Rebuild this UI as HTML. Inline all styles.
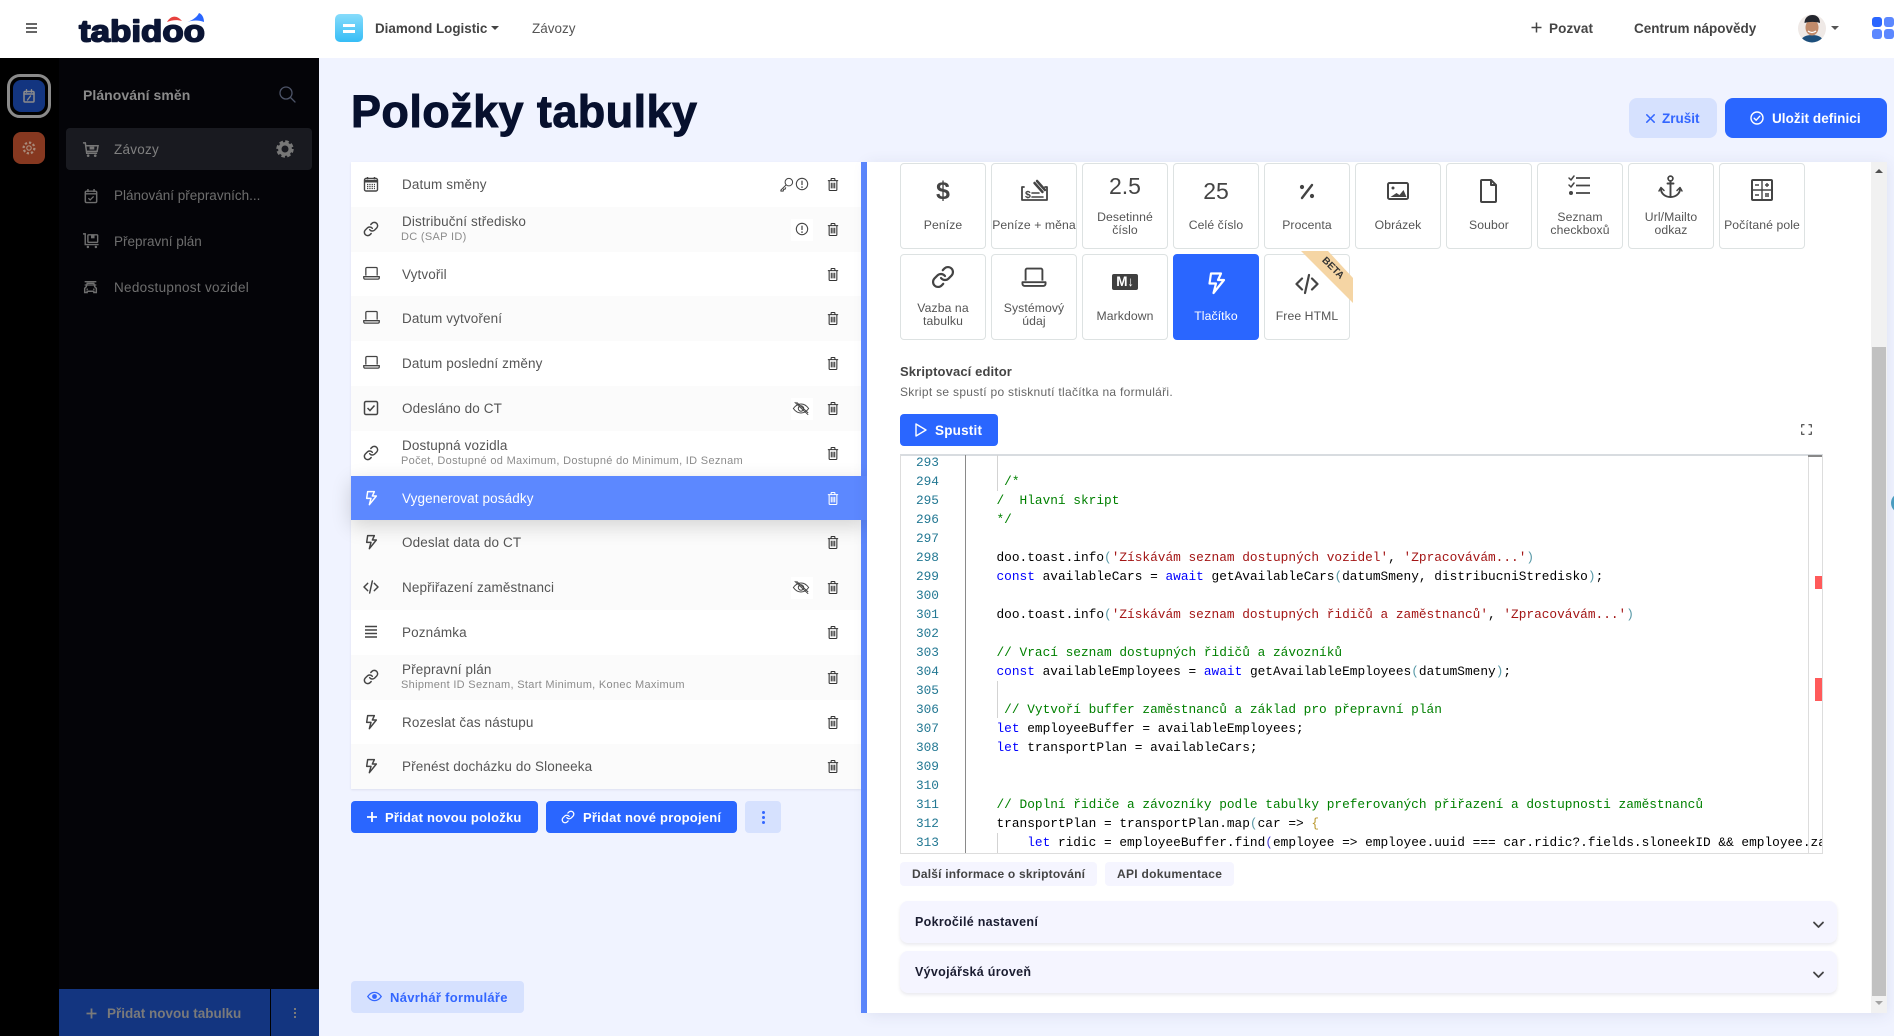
<!DOCTYPE html>
<html lang="cs"><head><meta charset="utf-8"><title>Položky tabulky</title>
<style>
*{box-sizing:border-box}
html,body{margin:0;padding:0;width:1894px;height:1036px;overflow:hidden;background:#f0f3ff;font-family:"Liberation Sans",sans-serif;color:#444}
.a{position:absolute}
.t{position:absolute;white-space:nowrap;line-height:20px}
svg{position:absolute;overflow:visible}
svg.s{fill:none;stroke:currentColor;stroke-width:2;stroke-linecap:round;stroke-linejoin:round}
.row{position:absolute;left:351px;width:510px;height:45px;background:#fff}
.row.e{background:#fbfbfb}
.row .n{position:absolute;left:51px;top:13px;font-size:13.5px;letter-spacing:.12px;line-height:20px;color:#555;white-space:nowrap}
.row .n.u{top:5px}
.row .d{position:absolute;left:50px;top:22px;font-size:11px;line-height:16px;color:#8b8b8b;white-space:nowrap;letter-spacing:.31px}
.row .ic{left:12px;top:14px;width:16px;height:16px;color:#444}
.row .tr{left:476px;top:15px;width:12px;height:15px;color:#333}
.row .x{position:absolute;left:440px;top:12px;width:22px;height:22px;background:#fff}
.btn{position:absolute;border-radius:4px;background:#2a66ff;color:#fff}
.lt{background:#d6e1fe;color:#3366ff}
.b{font-weight:700}
.tile{position:absolute;width:86px;height:86px;border:1px solid #dde2e2;border-radius:4px;background:#fff;color:#444}
.tile .l{position:absolute;left:-1px;width:86px;top:55px;text-align:center;font-size:12.2px;line-height:13px;color:#555;letter-spacing:.1px}
.tile .l.two{top:47px}
.tile svg.i{left:25px;top:14px;width:34px;height:26px}
.tile svg.i.up{top:9px}
.tile .big{position:absolute;left:-1px;width:86px;text-align:center;font-size:23px;line-height:28px;color:#444}
.tile.on{background:#2a66ff;border-color:#2a66ff;color:#fff}
.tile.on .l{color:#fff}
.code div{position:absolute;left:0;white-space:pre;line-height:19px;height:19px;font-size:12.8px;color:#000;font-family:"Liberation Mono",monospace}
.nums div{position:absolute;right:0;line-height:19px;height:19px;font-size:12.8px;color:#237893;font-family:"Liberation Mono",monospace}
.c{color:#008000}.k{color:#0000ff}.r{color:#a31515}.p{color:#5a9aa8}.y{color:#b8962a}.bb{color:#4a3fd0}
.acc{position:absolute;left:900px;width:937px;height:42px;border-radius:8px;background:#f5f5ff;box-shadow:0 2px 3px rgba(80,80,120,.12)}
.side{color:#6e6e6e;font-size:13.5px}
</style></head><body>

<svg width="0" height="0" style="position:absolute">
<defs>
<symbol id="trash" viewBox="0 0 14 16"><path d="M1 3.5h12M2.5 3.5V14a1 1 0 0 0 1 1h7a1 1 0 0 0 1-1V3.5M4.8 3.500V1.600a.6.6 0 0 1 .6-.6h3.200a.6.6 0 0 1 .6.6v1.900M5 6v6.500M7 6v6.500M9 6v6.500" fill="none" stroke="currentColor" stroke-width="1.250"/></symbol>
<symbol id="link" viewBox="0 0 24 24"><path d="M10 13a5 5 0 0 0 7.54.54l3-3a5 5 0 0 0-7.07-7.07l-1.72 1.71M14 11a5 5 0 0 0-7.54-.54l-3 3a5 5 0 0 0 7.07 7.07l1.71-1.71" fill="none" stroke="currentColor" stroke-width="2.200" stroke-linecap="round"/></symbol>
<symbol id="laptop" viewBox="0 0 24 20"><path d="M4 13V3a1.500 1.500 0 0 1 1.500-1.500h13A1.500 1.500 0 0 1 20 3v10M1 14.500h22v1.500a2 2 0 0 1-2 2H3a2 2 0 0 1-2-2z" fill="none" stroke="currentColor" stroke-width="1.800" stroke-linejoin="round"/></symbol>
<symbol id="bolt" viewBox="0 0 24 24"><path d="M7 2.500h10l-3 6.500h6L9.500 22l2.500-9.500H5.500z" fill="none" stroke="currentColor" stroke-width="2.200" stroke-linejoin="round"/></symbol>
<symbol id="code" viewBox="0 0 24 24"><path d="M7 6.500 1.500 12 7 17.500M17 6.500l5.500 5.500-5.500 5.500M14 3l-4 18" fill="none" stroke="currentColor" stroke-width="2.200" stroke-linecap="round" stroke-linejoin="round"/></symbol>
<symbol id="cal" viewBox="0 0 16 16"><rect x="1.500" y="2.500" width="13" height="12.500" rx="1.500" fill="none" stroke="currentColor" stroke-width="1.400"/><path d="M1.500 4h13v2.500h-13z" fill="currentColor"/><path d="M4.500 1v2.500M11.500 1v2.500" stroke="currentColor" stroke-width="1.500"/><path d="M4 8.500h8M4 10.500h8M4 12.500h8" stroke="currentColor" stroke-width="1.200" stroke-dasharray="1.300 1"/></symbol>
<symbol id="chk" viewBox="0 0 16 16"><rect x="1.500" y="1.500" width="13" height="13" rx="1.500" fill="none" stroke="currentColor" stroke-width="1.500"/><path d="m4.500 8 2.500 2.500 4.500-5" fill="none" stroke="currentColor" stroke-width="1.500"/></symbol>
<symbol id="lines" viewBox="0 0 16 16"><path d="M2 2.500h12M2 6h12M2 9.500h12M2 13h12" stroke="currentColor" stroke-width="1.400" fill="none"/></symbol>
<symbol id="info" viewBox="0 0 16 16"><circle cx="8" cy="8" r="6.500" fill="none" stroke="currentColor" stroke-width="1.200"/><path d="M8 4.200v5" stroke="currentColor" stroke-width="1.400" fill="none"/><circle cx="8" cy="11.500" r=".9" fill="currentColor"/></symbol>
<symbol id="key" viewBox="0 0 16 16"><circle cx="10.500" cy="5.500" r="4" fill="none" stroke="currentColor" stroke-width="1.100"/><path d="M7.500 8.500 2 14v1h2.500l.5-2h1.500l.8-2" fill="none" stroke="currentColor" stroke-width="1.100" stroke-linejoin="round"/></symbol>
<symbol id="eyex" viewBox="0 0 20 16"><path d="M1.500 8C4 4.500 7 3 10 3s6 1.500 8.500 5c-2.500 3.500-5.500 5-8.500 5S4 11.500 1.500 8z" fill="none" stroke="currentColor" stroke-width="1.100"/><circle cx="10" cy="8" r="3" fill="none" stroke="currentColor" stroke-width="1.100"/><path d="M3 1l15 14M5 1l13 12" stroke="currentColor" stroke-width="1.100" fill="none"/></symbol>
<symbol id="eye" viewBox="0 0 20 16"><path d="M1 8c2.500-3.700 5.700-5.500 9-5.500S16.500 4.300 19 8c-2.500 3.700-5.700 5.500-9 5.500S3.500 11.700 1 8z" fill="none" stroke="currentColor" stroke-width="1.700"/><circle cx="10" cy="8" r="3.200" fill="currentColor"/></symbol>
<symbol id="cart" viewBox="0 0 18 18"><path d="M1 2h2.500l1.500 11h11M4 5h13l-1 6H5" fill="none" stroke="currentColor" stroke-width="1.600"/><circle cx="6.500" cy="15.500" r="1.400" fill="currentColor"/><circle cx="14" cy="15.500" r="1.400" fill="currentColor"/><rect x="8" y="6" width="5" height="3" fill="currentColor"/></symbol>
<symbol id="calchk" viewBox="0 0 16 18"><rect x="1.500" y="3.500" width="13" height="13" rx="1.500" fill="none" stroke="currentColor" stroke-width="1.700"/><path d="M4.500 1v3.500M11.500 1v3.500M1.500 6.500h13" stroke="currentColor" stroke-width="1.700" fill="none"/><path d="m5 11.500 2 2 4-4" stroke="currentColor" stroke-width="1.500" fill="none"/></symbol>
<symbol id="cart2" viewBox="0 0 20 18"><path d="M1 1h2.500v12h15" fill="none" stroke="currentColor" stroke-width="1.600"/><rect x="6.500" y="2" width="11" height="8.500" rx="1" fill="none" stroke="currentColor" stroke-width="1.600"/><path d="M10 2h4v4h-4z" fill="currentColor"/><circle cx="6.500" cy="15.800" r="1.400" fill="currentColor"/><circle cx="15.500" cy="15.800" r="1.400" fill="currentColor"/></symbol>
<symbol id="car" viewBox="0 0 18 18"><path d="M4 8 5 4h8l1 4 2 2v5h-3v-1.500H5V15H2v-5z" fill="none" stroke="currentColor" stroke-width="1.700"/><path d="M2 2 16 2M2 6l14 0" stroke="currentColor" stroke-width="1.600" fill="none"/><circle cx="5" cy="11" r="1" fill="currentColor"/><circle cx="13" cy="11" r="1" fill="currentColor"/></symbol>
</defs></svg>

<!-- top bar -->
<div class="a" style="left:0;top:0;width:1894px;height:58px;background:#fff"></div>
<div class="a" style="left:26px;top:23px;width:11px;height:10px;border-top:2px solid #666;border-bottom:2px solid #666"><div style="margin-top:2px;height:2px;background:#666"></div></div>

<svg style="left:70px;top:8px" width="145" height="42" viewBox="0 0 145 42">
<text x="9" y="33.500" font-family="Liberation Sans" font-weight="700" font-size="31" textLength="126" lengthAdjust="spacingAndGlyphs" fill="#0b1534" stroke="#0b1534" stroke-width="1.600" stroke-linejoin="round">tabidoo</text>
<path d="M97 14C101 7 107 7 112 13 107 11.500 102 12 97 14z" fill="#e8413e"/>
<path d="M117 14C123 12 127 9 129 5c3 1 5 4.500 5 9-5-2-11-2-17 0z" fill="#2a66ff"/>
</svg>

<div class="a" style="left:335px;top:14px;width:28px;height:28px;border-radius:5px;background:linear-gradient(180deg,#86dcfb,#36bdf6)"></div>
<div class="a" style="left:343px;top:24px;width:12px;height:3px;background:#fff"></div>
<div class="a" style="left:343px;top:29.500px;width:12px;height:3px;background:#fff"></div>
<div class="t b" style="left:375px;top:19px;font-size:13.400px;color:#444">Diamond Logistic</div>
<div class="a" style="left:491px;top:26px;border:4px solid transparent;border-top:4px solid #444;border-bottom:0"></div>
<div class="t" style="left:532px;top:19px;font-size:13.500px;color:#555">Závozy</div>

<svg class="s" style="left:1531px;top:22px;color:#444" width="11" height="11" viewBox="0 0 11 11"><path d="M5.500 .5v10M.5 5.500h10" stroke-width="1.500" stroke-linecap="butt"/></svg>
<div class="t b" style="left:1549px;top:19px;font-size:13.500px;letter-spacing:.1px;color:#444">Pozvat</div>
<div class="t b" style="left:1634px;top:19px;font-size:13.500px;color:#444">Centrum nápovědy</div>

<svg style="left:1798px;top:14px" width="29" height="29" viewBox="0 0 29 29">
<defs><clipPath id="av"><circle cx="14" cy="14.500" r="14"/></clipPath></defs>
<g clip-path="url(#av)"><rect width="29" height="29" fill="#efe9e6"/>
<path d="M2 29c1-6 6-8 12-8s11 2 12 8z" fill="#1d4f7c"/>
<ellipse cx="14" cy="13.500" rx="6.500" ry="8" fill="#c08a6a"/>
<path d="M6.500 9c0-5 3.500-8 8-8s7.500 3 7.500 8c-4-1.500-11-1.500-15.500 0z" fill="#23262e"/>
<path d="M10 17q4 3 8 0" stroke="#fff" stroke-width="1.300" fill="none"/>
</g></svg>
<div class="a" style="left:1831px;top:26px;border:4px solid transparent;border-top:4px solid #555;border-bottom:0"></div>
<div class="a" style="left:1872px;top:17px;width:10px;height:10px;border-radius:3px;background:#2a66ff"></div>
<div class="a" style="left:1884px;top:17px;width:10px;height:10px;border-radius:3px;background:#5c88ff"></div>
<div class="a" style="left:1872px;top:29px;width:10px;height:10px;border-radius:3px;background:#5c88ff"></div>
<div class="a" style="left:1884px;top:29px;width:10px;height:10px;border-radius:3px;background:#5c88ff"></div>

<!-- rail + sidebar -->
<div class="a" style="left:0;top:58px;width:59px;height:978px;background:#000"></div>
<div class="a" style="left:59px;top:58px;width:260px;height:978px;background:#040408"></div>
<div class="a" style="left:7px;top:74px;width:44px;height:44px;border:3px solid #8a8a8a;border-radius:13px"></div>
<div class="a" style="left:13px;top:80px;width:32px;height:32px;background:#133580;border-radius:8px"></div>
<svg class="s" style="left:23px;top:89px;color:#8c8c8c" width="12" height="14" viewBox="0 0 12 14"><rect x="1" y="2.500" width="10" height="10.500" rx="1" stroke-width="1.500"/><path d="M3.500 .7v2.500M8.500 .7v2.500M1 5h10M4.500 11l3-4" stroke-width="1.400"/></svg>
<div class="a" style="left:13px;top:132px;width:32px;height:32px;background:#863820;border-radius:8px"></div>
<svg class="s" style="left:22px;top:141px;color:#a88a7a" width="14" height="14" viewBox="0 0 14 14"><circle cx="7" cy="7" r="2.200" stroke-width="1.200"/><circle cx="7" cy="7" r="5.400" stroke-width="2.200" stroke-dasharray="2.300 1.900" stroke-linecap="butt"/></svg>

<div class="t b" style="left:83px;top:85px;font-size:14px;letter-spacing:.05px;color:#8a8a8a">Plánování směn</div>
<svg class="s" style="left:279px;top:86px;color:#4d5468" width="17" height="17" viewBox="0 0 17 17"><circle cx="7" cy="7" r="6" stroke-width="1.300"/><path d="m11.500 11.500 4.500 4.500" stroke-width="1.300"/></svg>

<div class="a" style="left:66px;top:128px;width:246px;height:42px;background:#191a20;border-radius:4px"></div>
<svg style="left:82px;top:141px;color:#777" width="17" height="17"><use href="#cart"/></svg>
<div class="t side" style="left:114px;top:140px;color:#808080;letter-spacing:.25px">Závozy</div>
<svg style="left:276px;top:140px" width="18" height="18" viewBox="0 0 18 18"><circle cx="9" cy="9" r="5.200" fill="none" stroke="#777" stroke-width="3.400"/><circle cx="9" cy="9" r="7.300" fill="none" stroke="#777" stroke-width="2.800" stroke-dasharray="3.500 2.230"/></svg>

<svg style="left:84px;top:188px;color:#6e6e6e" width="14" height="16"><use href="#calchk"/></svg>
<div class="t side" style="left:114px;top:186px">Plánování přepravních...</div>
<svg style="left:82px;top:233px;color:#6e6e6e" width="18" height="16"><use href="#cart2"/></svg>
<div class="t side" style="left:114px;top:232px">Přepravní plán</div>
<svg style="left:83px;top:280px;color:#6e6e6e" width="15" height="15"><use href="#car"/></svg>
<div class="t side" style="left:114px;top:278px;letter-spacing:.3px">Nedostupnost vozidel</div>

<div class="a" style="left:59px;top:989px;width:260px;height:47px;background:#133580"></div>
<div class="a" style="left:270px;top:989px;width:1px;height:47px;background:#000"></div>
<svg class="s" style="left:86px;top:1008px;color:#7a7a7a" width="11" height="11" viewBox="0 0 11 11"><path d="M5.500 .5v10M.5 5.500h10" stroke-width="1.800" stroke-linecap="butt"/></svg>
<div class="t b" style="left:107px;top:1004px;font-size:13.500px;color:#7a7a7a">Přidat novou tabulku</div>
<div class="a" style="left:294px;top:1008px;width:2px;height:2px;background:#7a7a7a;box-shadow:0 4px 0 #7a7a7a,0 8px 0 #7a7a7a"></div>

<!-- title -->
<div class="t b" style="left:351px;top:87px;font-size:45px;line-height:50px;letter-spacing:.42px;color:#07102e;-webkit-text-stroke:.9px #07102e">Položky tabulky</div>
<div class="btn lt" style="left:1629px;top:98px;width:88px;height:40px;border-radius:8px"></div>
<svg class="s" style="left:1646px;top:114px;color:#3366ff" width="9" height="9" viewBox="0 0 9 9"><path d="m.8.800 7.400 7.400M8.200.800.800 8.200" stroke-width="1.500"/></svg>
<div class="t b" style="left:1662px;top:109px;font-size:13.500px;color:#3366ff">Zrušit</div>
<div class="btn" style="left:1725px;top:98px;width:162px;height:40px;border-radius:8px"></div>
<svg class="s" style="left:1750px;top:111px;color:#fff" width="14" height="14" viewBox="0 0 14 14"><circle cx="7" cy="7" r="6" stroke-width="1.400"/><path d="m4.200 7.200 2 2 3.600-4" stroke-width="1.400"/></svg>
<div class="t b" style="left:1772px;top:109px;font-size:13.500px;letter-spacing:.06px;color:#fff">Uložit definici</div>

<!-- list -->
<div class="a" style="left:351px;top:162px;width:510px;height:627px;box-shadow:0 1px 2px rgba(60,70,110,.1)"></div>
<div class="row" style="top:162px"><svg class="ic" style="color:#444"><use href="#cal"/></svg><div class="n">Datum směny</div>
 <svg style="left:428px;top:15px;width:15px;height:15px;color:#444"><use href="#key"/></svg><svg style="left:444px;top:15px;width:14px;height:14px;color:#444"><use href="#info"/></svg><svg class="tr"><use href="#trash"/></svg></div>
<div class="row e" style="top:207px"><svg class="ic"><use href="#link"/></svg><div class="n u">Distribuční středisko</div><div class="d">DC (SAP ID)</div>
 <div class="x"></div><svg style="left:444px;top:15px;width:14px;height:14px;color:#444"><use href="#info"/></svg><svg class="tr"><use href="#trash"/></svg></div>
<div class="row" style="top:252px"><svg class="ic" style="left:12px;width:17px;height:15px"><use href="#laptop"/></svg><div class="n">Vytvořil</div><svg class="tr"><use href="#trash"/></svg></div>
<div class="row e" style="top:296px"><svg class="ic" style="left:12px;width:17px;height:15px"><use href="#laptop"/></svg><div class="n">Datum vytvoření</div><svg class="tr"><use href="#trash"/></svg></div>
<div class="row" style="top:341px"><svg class="ic" style="left:12px;width:17px;height:15px"><use href="#laptop"/></svg><div class="n">Datum poslední změny</div><svg class="tr"><use href="#trash"/></svg></div>
<div class="row e" style="top:386px"><svg class="ic"><use href="#chk"/></svg><div class="n">Odesláno do CT</div>
 <div class="x"></div><svg style="left:441px;top:15px;width:18px;height:15px;color:#444"><use href="#eyex"/></svg><svg class="tr"><use href="#trash"/></svg></div>
<div class="row" style="top:431px"><svg class="ic"><use href="#link"/></svg><div class="n u">Dostupná vozidla</div><div class="d">Počet, Dostupné od Maximum, Dostupné do Minimum, ID Seznam</div><svg class="tr"><use href="#trash"/></svg></div>
<div class="row e" style="top:520px"><svg class="ic"><use href="#bolt"/></svg><div class="n">Odeslat data do CT</div><svg class="tr"><use href="#trash"/></svg></div>
<div class="row" style="top:565px;background:#fbfbfb"><svg class="ic"><use href="#code"/></svg><div class="n">Nepřiřazení zaměstnanci</div>
 <div class="x"></div><svg style="left:441px;top:15px;width:18px;height:15px;color:#444"><use href="#eyex"/></svg><svg class="tr"><use href="#trash"/></svg></div>
<div class="row" style="top:610px"><svg class="ic"><use href="#lines"/></svg><div class="n">Poznámka</div><svg class="tr"><use href="#trash"/></svg></div>
<div class="row e" style="top:655px"><svg class="ic"><use href="#link"/></svg><div class="n u">Přepravní plán</div><div class="d">Shipment ID Seznam, Start Minimum, Konec Maximum</div><svg class="tr"><use href="#trash"/></svg></div>
<div class="row" style="top:700px"><svg class="ic"><use href="#bolt"/></svg><div class="n">Rozeslat čas nástupu</div><svg class="tr"><use href="#trash"/></svg></div>
<div class="row e" style="top:744px"><svg class="ic"><use href="#bolt"/></svg><div class="n">Přenést docházku do Sloneeka</div><svg class="tr"><use href="#trash"/></svg></div>
<div class="a" style="left:861px;top:162px;width:6px;height:851px;background:#5c88ff"></div>
<div class="row" style="top:476px;width:516px;height:44px;background:#5c88ff;box-shadow:0 6px 20px rgba(0,0,0,.16)"><svg class="ic" style="color:#fff"><use href="#bolt"/></svg><div class="n" style="color:#fff">Vygenerovat posádky</div><svg class="tr" style="color:#fff"><use href="#trash"/></svg></div>

<div class="btn" style="left:351px;top:801px;width:187px;height:32px"></div>
<svg class="s" style="left:367px;top:812px;color:#fff" width="10" height="10" viewBox="0 0 10 10"><path d="M5 0v10M0 5h10" stroke-width="1.800" stroke-linecap="butt"/></svg>
<div class="t b" style="left:385px;top:808px;font-size:13px;letter-spacing:.22px;color:#fff">Přidat novou položku</div>
<div class="btn" style="left:546px;top:801px;width:191px;height:32px"></div>
<svg style="left:561px;top:810px;color:#fff" width="14" height="14"><use href="#link"/></svg>
<div class="t b" style="left:583px;top:808px;font-size:13px;letter-spacing:.22px;color:#fff">Přidat nové propojení</div>
<div class="btn lt" style="left:745px;top:801px;width:36px;height:32px"></div>
<div class="a" style="left:762px;top:811px;width:3px;height:3px;border-radius:50%;background:#3366ff;box-shadow:0 5px 0 #3366ff,0 10px 0 #3366ff"></div>

<div class="btn lt" style="left:351px;top:981px;width:173px;height:32px"></div>
<svg style="left:367px;top:990px;color:#3366ff" width="15" height="13"><use href="#eye"/></svg>
<div class="t b" style="left:390px;top:988px;font-size:13px;letter-spacing:.3px;color:#3366ff">Návrhář formuláře</div>

<!-- right panel -->
<div class="a" style="left:867px;top:162px;width:1020px;height:851px;background:#fff;box-shadow:0 2px 14px rgba(60,70,120,.1)"></div>
<div class="a" style="left:1871px;top:162px;width:16px;height:851px;background:#f1f1f1"></div>
<div class="a" style="left:1872px;top:347px;width:14px;height:649px;background:#c1c1c1"></div>
<div class="a" style="left:1875px;top:169px;border:4px solid transparent;border-bottom:4px solid #505050;border-top:0"></div>
<div class="a" style="left:1875px;top:1001px;border:4px solid transparent;border-top:4px solid #a3a3a3;border-bottom:0"></div>
<div class="a" style="left:1891px;top:493px;width:20px;height:20px;border-radius:50%;background:#4a9cc0"></div>

<!-- tiles row 1 -->
<div class="tile" style="left:900px;top:163px"><div class="big" style="top:13px;font-weight:700;font-size:25px">$</div><div class="l">Peníze</div></div>
<div class="tile" style="left:991px;top:163px"><svg class="i s" viewBox="0 0 34 26" style="left:25px;top:14px"><path d="M7 9H5v13h25V9h-2" stroke-width="1.800"/><path d="M20 3l8 9M17.500 5l8 9" stroke-width="2.500"/><text x="8" y="20" font-size="10.500" font-family="Liberation Sans" font-weight="700" fill="#444" stroke="none">$</text><path d="M15 15h7M15 19h11" stroke-width="1.600"/></svg><div class="l" style="white-space:nowrap">Peníze + měna</div></div>
<div class="tile" style="left:1082px;top:163px"><div class="big" style="top:8px">2.5</div><div class="l two">Desetinné<br>číslo</div></div>
<div class="tile" style="left:1173px;top:163px"><div class="big" style="top:13px">25</div><div class="l">Celé číslo</div></div>
<div class="tile" style="left:1264px;top:163px"><svg class="i s" viewBox="0 0 34 26" style="top:14px"><path d="M22 7 12 20" stroke-width="2.400"/><circle cx="12" cy="9" r="2.100" fill="#444" stroke="none"/><circle cx="22" cy="18" r="2.100" fill="#444" stroke="none"/></svg><div class="l">Procenta</div></div>
<div class="tile" style="left:1355px;top:163px"><svg class="i s" viewBox="0 0 34 26" style="top:14px"><rect x="7" y="5" width="20" height="16" rx="1.500" stroke-width="2"/><circle cx="12" cy="10" r="1.500" fill="#444" stroke="none"/><path d="m9.500 19 6-4 3 2 4-5 3 7z" fill="#444" stroke="none"/></svg><div class="l">Obrázek</div></div>
<div class="tile" style="left:1446px;top:163px"><svg class="i s" viewBox="0 0 34 26" style="top:14px"><path d="M10 2h9l5 5v16a1 1 0 0 1-1 1H10a1 1 0 0 1-1-1V3a1 1 0 0 1 1-1zM19 2v5h5" stroke-width="2"/></svg><div class="l">Soubor</div></div>
<div class="tile" style="left:1537px;top:163px"><svg class="i up s" viewBox="0 0 34 26"><path d="M13 5h14M13 12.500h14M13 20h14" stroke-width="1.800" stroke-linecap="butt"/><path d="m6 5 2 2 3-4M6 12l2 2 3-4" stroke-width="1.500"/><circle cx="8" cy="20" r="2" fill="#444" stroke="none"/></svg><div class="l two">Seznam<br>checkboxů</div></div>
<div class="tile" style="left:1628px;top:163px"><svg class="i up s" viewBox="0 0 34 26"><circle cx="16.500" cy="5.500" r="2.400" stroke-width="1.700"/><path d="M16.500 8v16M13.500 10.500h6M7 16c0 4.500 4 8 9.500 8s9.500-3.500 9.500-8" stroke-width="1.900"/><path d="m5 18 2-3.500 3 3M23 17.500l3-3 2 3.500" stroke-width="1.500"/></svg><div class="l two">Url/Mailto<br>odkaz</div></div>
<div class="tile" style="left:1719px;top:163px"><svg class="i s" viewBox="0 0 34 26" style="top:13px"><rect x="7" y="3" width="20" height="20" rx="1" stroke-width="2"/><path d="M7 13h20M17 3v20M10 8h4M20 8h4M22 6v4M10 18h4M20 17h4M20 19h4" stroke-width="1.400" stroke-linecap="butt"/></svg><div class="l" style="white-space:nowrap">Počítané pole</div></div>

<!-- tiles row 2 -->
<div class="tile" style="left:900px;top:254px"><svg style="left:30px;top:10px;width:24px;height:24px"><use href="#link"/></svg><div class="l two">Vazba na<br>tabulku</div></div>
<div class="tile" style="left:991px;top:254px"><svg style="left:29px;top:12px;width:26px;height:21px"><use href="#laptop"/></svg><div class="l two">Systémový<br>údaj</div></div>
<div class="tile" style="left:1082px;top:254px"><div class="a" style="left:29px;top:19px;width:26px;height:16px;border-radius:2px;background:#3f3f3f;color:#fff;font-weight:700;font-size:13.500px;line-height:16px;text-align:center;letter-spacing:-.3px">M↓</div><div class="l">Markdown</div></div>
<div class="tile on" style="left:1173px;top:254px"><svg style="left:30px;top:16px;width:24px;height:24px;color:#fff"><use href="#bolt"/></svg><div class="l">Tlačítko</div></div>
<div class="tile" style="left:1264px;top:254px"><svg style="left:30px;top:17px;width:24px;height:24px;color:#444"><use href="#code"/></svg><div class="l">Free HTML</div></div>
<svg style="left:1300px;top:250px" width="54" height="54" viewBox="0 0 54 54"><path d="M1 1h27l25 27v25z" fill="#f5d5a4"/><text x="33" y="21" font-size="10" font-weight="700" font-family="Liberation Sans" fill="#333" text-anchor="middle" transform="rotate(45 33 18)">BETA</text></svg>

<div class="t b" style="left:900px;top:362px;font-size:13px;letter-spacing:.12px;color:#444">Skriptovací editor</div>
<div class="t" style="left:900px;top:382px;font-size:12px;letter-spacing:.3px;color:#666">Skript se spustí po stisknutí tlačítka na formuláři.</div>
<div class="btn" style="left:900px;top:414px;width:98px;height:32px"></div>
<svg class="s" style="left:915px;top:423px;color:#fff" width="12" height="14" viewBox="0 0 12 14"><path d="M1 1l10 6-10 6z" stroke-width="1.400"/></svg>
<div class="t b" style="left:935px;top:421px;font-size:13.500px;letter-spacing:.2px;color:#fff">Spustit</div>
<svg class="s" style="left:1801px;top:424px;color:#444" width="11" height="11" viewBox="0 0 11 11"><path d="M.7 3.500V.7h2.800M7.500.7h2.800v2.800M10.300 7.500v2.800H7.500M3.500 10.300H.7V7.500" stroke-width="1.200" stroke-linecap="butt"/></svg>

<!-- editor -->
<div class="a" style="left:900px;top:454px;width:923px;height:400px;border:1px solid #ddd;border-top:2px solid #d8dce0;background:#fff"></div>
<div class="a nums" style="left:900px;top:453px;width:39px;height:400px">
<div style="top:0">293</div><div style="top:19px">294</div><div style="top:38px">295</div><div style="top:57px">296</div><div style="top:76px">297</div><div style="top:95px">298</div><div style="top:114px">299</div><div style="top:133px">300</div><div style="top:152px">301</div><div style="top:171px">302</div><div style="top:190px">303</div><div style="top:209px">304</div><div style="top:228px">305</div><div style="top:247px">306</div><div style="top:266px">307</div><div style="top:285px">308</div><div style="top:304px">309</div><div style="top:323px">310</div><div style="top:342px">311</div><div style="top:361px">312</div><div style="top:380px">313</div>
</div>
<div class="a" style="left:965px;top:455px;width:1px;height:398px;background:#8a8a8a"></div>
<div class="a" style="left:997px;top:455px;width:1px;height:36px;background:#d3d3d3"></div>
<div class="a" style="left:997px;top:681px;width:1px;height:37px;background:#d3d3d3"></div>
<div class="a" style="left:997px;top:833px;width:1px;height:20px;background:#d3d3d3"></div>
<div class="a code" style="left:996.500px;top:453px;width:825.500px;height:400px;overflow:hidden">
<div style="top:19px"><span class="c"> /*</span></div>
<div style="top:38px"><span class="c">/  Hlavní skript</span></div>
<div style="top:57px"><span class="c">*/</span></div>
<div style="top:95px">doo.toast.info<span class="p">(</span><span class="r">'Získávám seznam dostupných vozidel'</span>, <span class="r">'Zpracovávám...'</span><span class="p">)</span></div>
<div style="top:114px"><span class="k">const</span> availableCars = <span class="k">await</span> getAvailableCars<span class="p">(</span>datumSmeny, distribucniStredisko<span class="p">)</span>;</div>
<div style="top:152px">doo.toast.info<span class="p">(</span><span class="r">'Získávám seznam dostupných řidičů a zaměstnanců'</span>, <span class="r">'Zpracovávám...'</span><span class="p">)</span></div>
<div style="top:190px"><span class="c">// Vrací seznam dostupných řidičů a závozníků</span></div>
<div style="top:209px"><span class="k">const</span> availableEmployees = <span class="k">await</span> getAvailableEmployees<span class="p">(</span>datumSmeny<span class="p">)</span>;</div>
<div style="top:247px"><span class="c"> // Vytvoří buffer zaměstnanců a základ pro přepravní plán</span></div>
<div style="top:266px"><span class="k">let</span> employeeBuffer = availableEmployees;</div>
<div style="top:285px"><span class="k">let</span> transportPlan = availableCars;</div>
<div style="top:342px"><span class="c">// Doplní řidiče a závozníky podle tabulky preferovaných přiřazení a dostupnosti zaměstnanců</span></div>
<div style="top:361px">transportPlan = transportPlan.map<span class="p">(</span>car =&gt; <span class="y">{</span></div>
<div style="top:380px">    <span class="k">let</span> ridic = employeeBuffer.find<span class="bb">(</span>employee =&gt; employee.uuid === car.ridic?.fields.sloneekID &amp;&amp; employee.zaměstnanec</div>
</div>
<div class="a" style="left:1808px;top:455px;width:1px;height:398px;background:#ddd"></div>
<div class="a" style="left:1808px;top:455px;width:14px;height:2px;background:#888"></div>
<div class="a" style="left:1815px;top:576px;width:7px;height:13px;background:#ff5a5a"></div>
<div class="a" style="left:1815px;top:678px;width:7px;height:23px;background:#ff5a5a"></div>

<div class="a" style="left:900px;top:862px;width:197px;height:24px;background:#f5f5ff;border-radius:4px"></div>
<div class="t b" style="left:912px;top:864px;font-size:12px;letter-spacing:.2px;color:#444">Další informace o skriptování</div>
<div class="a" style="left:1105px;top:862px;width:129px;height:24px;background:#f5f5ff;border-radius:4px"></div>
<div class="t b" style="left:1117px;top:864px;font-size:12px;letter-spacing:.3px;color:#444">API dokumentace</div>

<div class="acc" style="top:901px"></div>
<div class="t b" style="left:915px;top:912px;font-size:12.500px;letter-spacing:.3px;color:#1a1c30">Pokročilé nastavení</div>
<svg class="s" style="left:1813px;top:921px;color:#444" width="11" height="8" viewBox="0 0 11 8"><path d="m1 1.500 4.500 4.500L10 1.500" stroke-width="1.800"/></svg>
<div class="acc" style="top:951px"></div>
<div class="t b" style="left:915px;top:962px;font-size:12.500px;letter-spacing:.3px;color:#1a1c30">Vývojářská úroveň</div>
<svg class="s" style="left:1813px;top:971px;color:#444" width="11" height="8" viewBox="0 0 11 8"><path d="m1 1.500 4.500 4.500L10 1.500" stroke-width="1.800"/></svg>

</body></html>
